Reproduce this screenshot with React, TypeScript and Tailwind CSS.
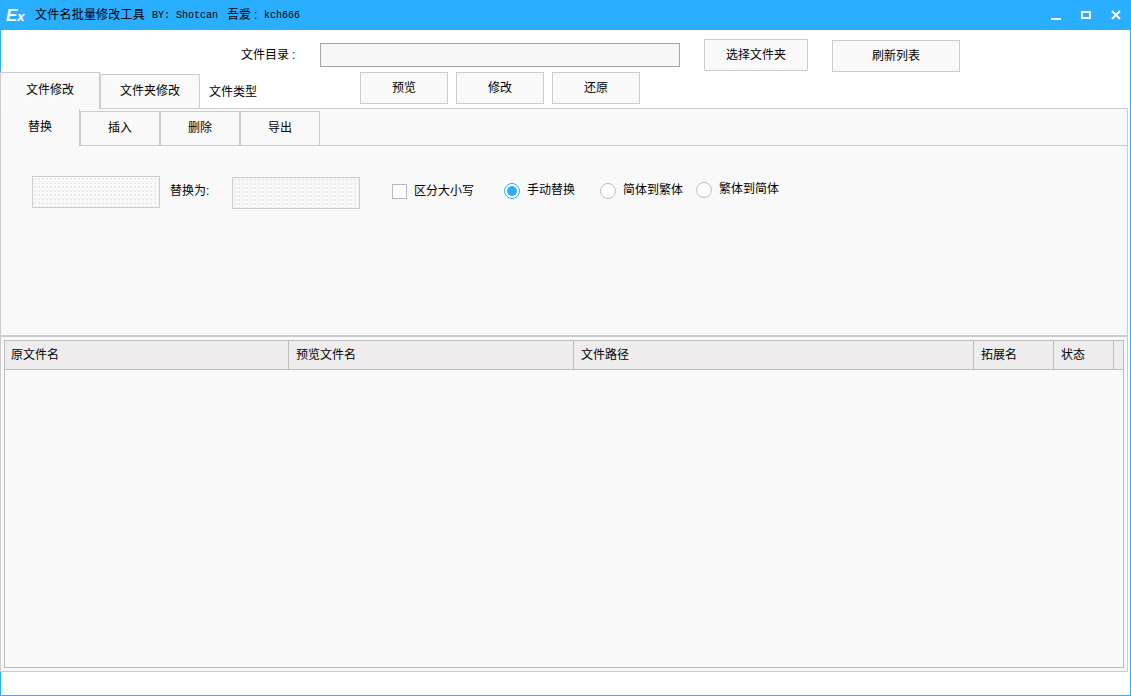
const cjk = "font-['Liberation_Sans','Noto_Sans_CJK_SC',sans-serif]";
const dots = "bg-[#f8f8f8] bg-[radial-gradient(#ebebeb_0.9px,transparent_1px)] bg-[length:4px_4px]";
const light = "bg-[#fafafa] bg-[radial-gradient(#f3f3f3_0.8px,transparent_0.9px)] bg-[length:3px_3px]";

function Btn({ label, className }: { label: string; className: string }) {
  return (
    <div className={`flex items-center justify-center border border-[#cccccc] text-[12px] text-black ${light} ${className}`}>
      {label}
    </div>
  );
}

function Radio({ label, on, className }: { label: string; on?: boolean; className: string }) {
  return (
    <div className={`flex items-center gap-[7px] text-[12px] text-black ${className}`}>
      <span className={`flex h-4 w-4 items-center justify-center rounded-full border bg-white ${on ? "border-[#2aaeff]" : "border-[#bdbdbd]"}`}>
        {on && <span className="h-[10px] w-[10px] rounded-full bg-[#2aaeff]" />}
      </span>
      <span className="-mt-[2px]">{label}</span>
    </div>
  );
}

const cols = [
  { t: "原文件名", w: "w-[284px] pl-[6px]" },
  { t: "预览文件名", w: "w-[285px] pl-[7px]" },
  { t: "文件路径", w: "w-[400px] pl-[7px]" },
  { t: "拓展名", w: "w-[80px] pl-[7px]" },
  { t: "状态", w: "w-[60px] pl-[7px]" },
];

export default function App() {
  return (
    <div className={`flex h-[696px] w-[1131px] flex-col overflow-hidden bg-white ${cjk}`}>
      {/* title bar */}
      <div className="flex h-[30px] shrink-0 items-center bg-[#2aaeff] pl-[6px] pr-[10px] text-[12px] text-black">
        <span className="w-[29px] font-['Liberation_Sans'] text-[17px] font-bold italic leading-none text-white">
          E<span className="text-[13px]">x</span>
        </span>
        <span className="w-[110px] tracking-[0.22px]">文件名批量修改工具</span>
        <span className="ml-[7px] w-[66px] font-['Liberation_Mono'] text-[10px]">BY: Shotcan</span>
        <span className="ml-[9px] w-[37px]">
          吾爱<span className="ml-[3px]">:</span>
        </span>
        <span className="font-['Liberation_Mono'] text-[10px]">kch666</span>
        <div className="ml-auto flex items-center gap-[20px]">
          <svg width="10" height="10" viewBox="0 0 10 10" className="mt-[2px]">
            <rect x="0" y="7" width="10" height="2" fill="#fff" />
          </svg>
          <svg width="10" height="8" viewBox="0 0 10 8">
            <path d="M0 0h10v8H0z M2 2v4h6V2z" fill="#fff" fillRule="evenodd" />
          </svg>
          <svg width="10" height="10" viewBox="0 0 10 10">
            <path d="M1 1l8 8M9 1l-8 8" stroke="#fff" strokeWidth="2" fill="none" />
          </svg>
        </div>
      </div>

      <div className="flex min-h-0 flex-1 flex-col border-b border-r border-[#2aaeff]">
        {/* directory row */}
        <div className="flex h-[42px] shrink-0 border-l border-[#2aaeff]">
          <span className="ml-[240px] mt-[17px] w-[55px] text-[12px] leading-[16px] text-black">
            文件目录<span className="ml-[3px]">:</span>
          </span>
          <div className="ml-[24px] mt-[13px] h-[24px] w-[360px] border border-[#a6a6a6] bg-[#f7f7f7]" />
          <Btn label="选择文件夹" className="ml-[24px] mt-[9px] h-[32px] w-[104px]" />
          <Btn label="刷新列表" className="ml-[24px] mt-[10px] h-[32px] w-[128px]" />
        </div>

        {/* outer tabs + actions */}
        <div className="relative z-10 -mb-px flex h-[37px] shrink-0">
          <div className={`flex h-[37px] w-[100px] items-center justify-center border border-b-0 border-[#cccccc] pb-[3px] text-[12px] text-black ${light}`}>
            文件修改
          </div>
          <div className={`mt-[2px] flex h-[35px] w-[100px] items-center justify-center border border-[#cccccc] pb-[1px] text-[12px] text-black ${light}`}>
            文件夹修改
          </div>
          <span className="ml-[9px] mt-[12px] text-[12px] leading-[16px] text-black">文件类型</span>
          <div className="ml-[103px] flex h-[32px] gap-[8px]">
            <Btn label="预览" className="w-[88px]" />
            <Btn label="修改" className="w-[88px]" />
            <Btn label="还原" className="w-[88px]" />
          </div>
        </div>

        {/* editor panel */}
        <div className="mr-[2px] flex h-[227px] shrink-0 flex-col border-x border-t border-[#cccccc] bg-[#f9f9f9]">
          <div className="relative z-10 -mb-px flex h-[37px] shrink-0">
            <div className="flex h-[37px] w-[79px] items-center justify-center border-r border-[#cccccc] bg-[#f9f9f9] pb-[2px] text-[12px] text-black">
              替换
            </div>
            {["插入", "删除", "导出"].map((t) => (
              <div
                key={t}
                className="mt-[2px] flex h-[35px] w-[80px] items-center justify-center border border-[#cccccc] pb-[1px] text-[12px] text-black"
              >
                {t}
              </div>
            ))}
          </div>
          <div className="flex flex-1 items-start border-t border-[#cccccc]">
            <div className={`ml-[31px] mt-[30px] h-[32px] w-[128px] border border-[#cccccc] ${dots}`} />
            <span className="ml-[10px] mt-[37px] w-[42px] text-[12px] leading-[16px] text-black">替换为:</span>
            <div className={`ml-[20px] mt-[31px] h-[32px] w-[128px] border border-[#cccccc] ${dots}`} />
            <div className="ml-[32px] mt-[37px] flex items-center gap-[7px] text-[12px] leading-[16px] text-black">
              <span className="h-[15px] w-[15px] border border-[#b9b9b9] bg-white" />
              区分大小写
            </div>
            <Radio label="手动替换" on className="ml-[30px] mt-[37px]" />
            <Radio label="简体到繁体" className="ml-[25px] mt-[37px]" />
            <Radio label="繁体到简体" className="ml-[13px] mt-[36px]" />
          </div>
        </div>

        {/* list panel */}
        <div className="mr-[2px] flex h-[337px] shrink-0 flex-col border-x border-t-2 border-b border-[#cccccc] bg-[#f9f9f9] px-[3px] pb-[3px] pt-[3px]">
          <div className="flex min-h-0 flex-1 flex-col border border-[#bdbdbd] bg-[#f9f9f9]">
            <div className="flex h-[29px] shrink-0 border-b border-[#bdbdbd] bg-[#eeecec] text-[12px] text-black">
              {cols.map((c) => (
                <div key={c.t} className={`flex ${c.w} shrink-0 items-center border-r border-[#bdbdbd]`}>
                  {c.t}
                </div>
              ))}
            </div>
          </div>
        </div>

        {/* status strip */}
        <div className="flex-1 border-l border-[#2aaeff]" />
      </div>
    </div>
  );
}
